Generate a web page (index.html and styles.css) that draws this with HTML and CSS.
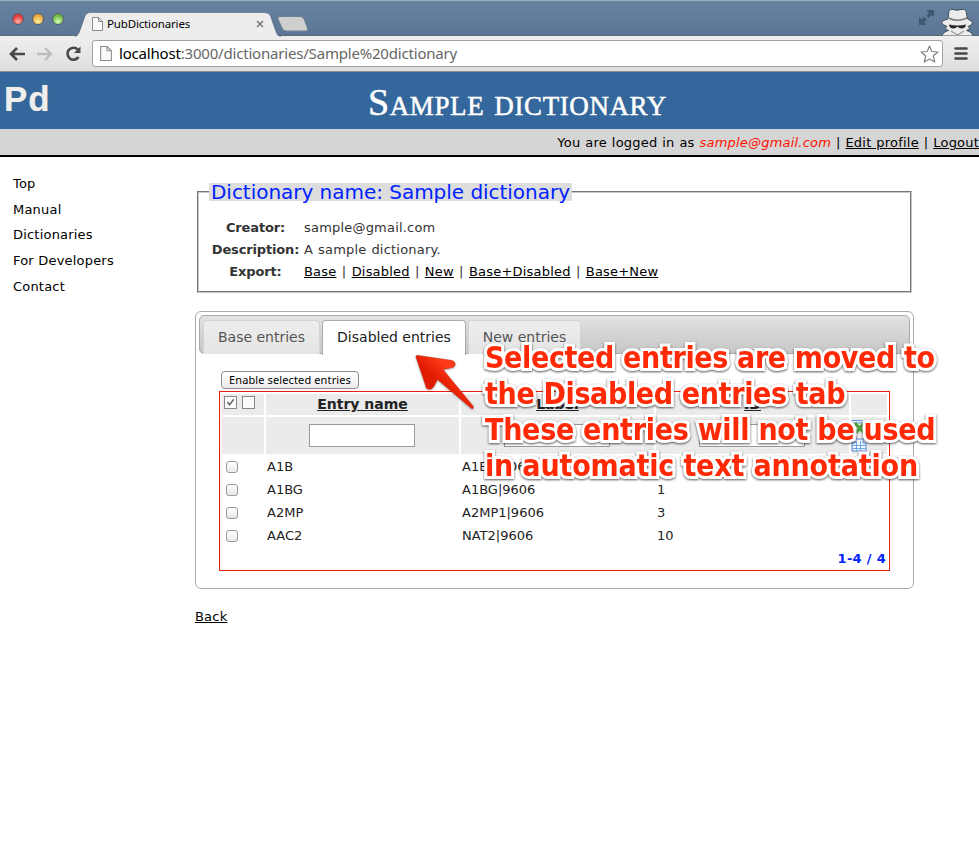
FILE: index.html
```html
<!DOCTYPE html>
<html lang="en">
<head>
<meta charset="utf-8">
<title>PubDictionaries</title>
<link rel="stylesheet" href="styles.css">
</head>
<body>
<div class="chrome">
  <div class="tabstrip">
    <div class="lights"><i class="light red"></i><i class="light amber"></i><i class="light green"></i></div>
    <div class="browser-tab">
      <svg class="tab-shape" width="206" height="26" viewBox="0 0 206 26"><path d="M0 25.500C3 25 4 22 5.500 18L10 5Q11.500 1.500 15 1.500H189Q194 1.500 195.500 5L200 18C201.500 22 202 25 206 25.500V26H0Z" fill="#ededed"/><path d="M0 25.500C3 25 4 22 5.500 18L10 5Q11.500 1.500 15 1.500H189Q194 1.500 195.500 5L200 18C201.500 22 202 25 206 25.500" fill="none" stroke="#52687f" stroke-opacity=".6"/></svg>
      <svg class="page-icon small" width="11" height="14" viewBox="0 0 11 14"><path d="M.5.5H6.500L10.500 4.500V13.500H.5ZM6.500.5V4.500H10.500" fill="#fafafa" stroke="#8b8b8b"/></svg>
      <span class="tab-title">PubDictionaries</span>
      <svg class="close" width="8" height="8" viewBox="0 0 8 8"><path d="M1 1L7 7M7 1L1 7" stroke="#777" stroke-width="1.500"/></svg>
    </div>
    <svg class="new-tab" width="32" height="16" viewBox="0 0 32 16"><path d="M1 3Q0 .5 3 .5H23Q26 .5 27 3L30.500 12Q31.500 15 28.500 15H9Q6 15 5 12Z" fill="#cfcfcf" stroke="#6f8194"/></svg>
    <svg class="expand" width="15" height="15" viewBox="0 0 15 15"><path d="M7 0H15V7L12.500 5L10 8L7.500 5.500L10 2.800ZM0 7L2.500 9.500L5 7L8 9.500L5 12L7.500 15H0Z" fill="#3f5871"/></svg>
    <svg class="spy" width="34" height="28" viewBox="0 0 34 28"><path d="M8 11L9 3Q10 .5 13 1.500Q17 3 21 1.500Q25 .5 26 3L27.500 11Q32 12.500 32.500 15Q31 18 28 18.500L30 20.500L26.500 22.500Q32 24 33 28H2Q3 24 8.500 22.500L5 20.500L7 18.500Q3 17 1.500 14.500Q3 12 8 11Z" fill="#ececec" stroke="#44525f"/><path d="M8.500 10Q17 14.500 27 10" fill="none" stroke="#777" stroke-width="1.500"/><path d="M9 16.500Q17 18.500 26 16.500Q25.500 20.500 21.500 20.500Q19 20.500 17.500 18.500Q16 20.500 13 20.500Q9.500 20.500 9 16.500Z" fill="#2b2b2b"/><path d="M11 23L17.500 27L24 23" fill="none" stroke="#999" stroke-width="1.300"/></svg>
  </div>
  <div class="toolbar">
    <svg class="nav-icon" width="16" height="14" viewBox="0 0 16 14"><path d="M8 1L2 7L8 13M2 7H16" fill="none" stroke="#484848" stroke-width="2.600"/></svg>
    <svg class="nav-icon" width="16" height="14" viewBox="0 0 16 14"><path d="M8 1L14 7L8 13M14 7H0" fill="none" stroke="#bdbdbd" stroke-width="2.400"/></svg>
    <svg class="nav-icon" width="16" height="16" viewBox="0 0 16 16"><path d="M12.800 3.500A6 6 0 1 0 13.500 11" fill="none" stroke="#484848" stroke-width="2.600"/><path d="M15.500 .5V7H9Z" fill="#484848"/></svg>
    <div class="omnibox">
      <svg class="page-icon" width="12" height="15" viewBox="0 0 11 14"><path d="M.5.5H6.500L10.500 4.500V13.500H.5ZM6.500.5V4.500H10.500" fill="#fafafa" stroke="#8b8b8b"/></svg>
      <span class="url"><b>localhost</b>:3000/dictionaries/Sample%20dictionary</span>
      <svg class="star" width="19" height="18" viewBox="0 0 19 18"><path d="M9.500 1L11.800 6.500L18 7L13.300 11L14.800 17L9.500 14L4.200 17L5.700 11L1 7L7.200 6.500Z" fill="#fff" stroke="#848484" stroke-width="1.200" stroke-linejoin="round"/></svg>
    </div>
    <svg class="menu" width="14" height="13" viewBox="0 0 14 13"><path d="M1.500 1.500H12.500M1.500 6.500H12.500M1.500 11.500H12.500" stroke="#484848" stroke-width="2.600" stroke-linecap="round"/></svg>
  </div>
</div>

<header class="banner"><span class="logo">Pd</span><h1>Sample dictionary</h1></header>
<div class="userbar"><span>You are logged in as <em>sample@gmail.com</em> | <a>Edit profile</a> | <a>Logout</a></span></div>

<div class="layout">
  <nav class="sidebar"><span>Top</span><span>Manual</span><span>Dictionaries</span><span>For Developers</span><span>Contact</span></nav>
  <main>
    <fieldset>
      <legend>Dictionary name: Sample dictionary</legend>
      <div class="info">
        <b>Creator:</b><span>sample@gmail.com</span>
        <b>Description:</b><span>A sample dictionary.</span>
        <b>Export:</b><span class="links"><a>Base</a> | <a>Disabled</a> | <a>New</a> | <a>Base+Disabled</a> | <a>Base+New</a></span>
      </div>
    </fieldset>
    <section class="tabs">
      <div class="tab-nav"><div class="tab t1">Base entries</div><div class="tab active">Disabled entries</div><div class="tab t3">New entries</div></div>
      <div class="panel">
        <button class="enable">Enable selected entries</button>
        <div class="table">
          <div class="th checks"><i class="sq"><svg width="11" height="11" viewBox="0 0 12 12"><path d="M2.500 5.500L5 8.500L9.500 2.500" fill="none" stroke="#666" stroke-width="1.600"/></svg></i><i class="sq"></i></div>
          <div class="th">Entry name</div><div class="th">Label</div><div class="th">ID</div><div class="th"></div>
          <div class="filter"></div><div class="filter"><input></div><div class="filter"><input></div><div class="filter"><input></div>
          <div class="filter sheet"><svg width="16" height="34" viewBox="0 0 16 34"><path d="M1 1.500H15M3 4H13" stroke="#5d9be0" /><path d="M4 4L13 14M13 4L5 14" stroke="#4ba03c" stroke-width="3"/><path d="M4 20H12V24H15V32H1V24H4Z" fill="#edf6ff" stroke="#568bd6"/><path d="M1 26.500H15M1 29.500H15M5.500 22V32M9.500 22V32" stroke="#76a6e6"/></svg></div>
          <div class="td"><i class="box"></i></div><div class="td">A1B</div><div class="td">A1B|9606</div><div class="td">2</div><div></div>
          <div class="td"><i class="box"></i></div><div class="td">A1BG</div><div class="td">A1BG|9606</div><div class="td">1</div><div></div>
          <div class="td"><i class="box"></i></div><div class="td">A2MP</div><div class="td">A2MP1|9606</div><div class="td">3</div><div></div>
          <div class="td"><i class="box"></i></div><div class="td">AAC2</div><div class="td">NAT2|9606</div><div class="td">10</div><div></div>
          <div class="pager">1-4 / 4</div>
        </div>
      </div>
    </section>
    <a class="back">Back</a>
  </main>
</div>

<svg class="arrow" width="70" height="64" viewBox="0 0 70 64"><defs><linearGradient id="g" x1="0" y1=".6" x2=".6" y2="0"><stop offset=".4" stop-color="#e01b00"/><stop offset=".8" stop-color="#ff3a18"/></linearGradient></defs><path d="M5 6Q4.500 4 7 4.500L41 9.500Q45 11 44 14Q43 17 39 17L32 18.500L62 55Q63 59 60 57L26.500 28.500L22.500 36Q20.500 39 17 38Q14.500 37 14.500 34Z" fill="url(#g)" stroke="#c82a10" stroke-width=".6" transform="matrix(1 0 0 1 0 1)"/></svg>
<div class="note"><span class="l1">Selected entries are moved to</span><span class="l2">the Disabled entries tab</span><span class="l3">These entries will not be used</span><span class="l4">in automatic text annotation</span></div>
</body>
</html>
```
FILE: styles.css
```css
* { box-sizing: border-box; }
body { margin: 0; width: 979px; height: 855px; overflow: hidden; position: relative; background: #fff; color: #111; font: 13px/18px "DejaVu Sans", sans-serif; letter-spacing: .2px; }
svg { display: block; flex: none; }
a { color: #000; text-decoration: underline; }
.chrome { font-family: "Noto Sans", "Open Sans", sans-serif; letter-spacing: 0; }
.tabstrip { height: 36px; display: flex; background: linear-gradient(#6883a1, #5b7694); border-top: 1px solid #9cb0c0; border-bottom: 1px solid #5d6b78; }
.lights { display: flex; gap: 8px; padding: 12px 0 0 12px; width: 75px; }
.light { width: 12px; height: 12px; border-radius: 50%; border: 1px solid #55606b; }
.red { background: radial-gradient(circle at 50% 75%, #ffb0a5, #e2383a 65%); }
.amber { background: radial-gradient(circle at 50% 75%, #fff0a0, #eca53a 65%); }
.green { background: radial-gradient(circle at 50% 75%, #d6ffb0, #6fb84a 65%); }
.browser-tab { position: relative; width: 206px; height: 26px; margin-top: 10px; display: flex; align-items: center; padding: 0 17px; }
.tab-shape { position: absolute; left: 0; top: 0; }
.browser-tab > :not(.tab-shape) { position: relative; }
.tab-title { font-size: 11.500px; color: #000; margin-left: 4px; flex: 1; letter-spacing: -.15px; }
.close { margin-right: 0; }
.new-tab { margin: 15px 0 0 -4px; }
.expand { margin: 9px 6px 0 auto; }
.spy { margin: 7px 5px 0 0; }
.toolbar { height: 36px; display: flex; align-items: center; background: linear-gradient(#efefef, #dedede); border-bottom: 1px solid #8a8f90; padding: 0 11px 0 9px; }
.nav-icon { margin-right: 12px; }
.omnibox { height: 27px; flex: 1; background: #fff; border: 1px solid #a2a2a2; border-radius: 3px; display: flex; align-items: center; padding: 0 3px 0 7px; margin-left: -1px; }
.url { font-size: 15px; color: #666; margin: -2px 0 0 7px; flex: 1; letter-spacing: -.19px; }
.url b { font-weight: normal; color: #000; }
.menu { margin-left: 11px; }
.banner { height: 57px; background: #34679b; display: flex; }
.logo { font: bold 35px/36px "Liberation Sans", sans-serif; color: #eee; letter-spacing: .8px; margin: 9px 0 0 4px; width: 364px; text-shadow: 0 0 1px #999; }
h1 { margin: 7px 0 0; font: normal 38px/46px "Liberation Serif", serif; font-variant: small-caps; color: #fff; letter-spacing: .6px; white-space: nowrap; -webkit-text-stroke: .5px #fff; }
.userbar { height: 28px; background: #d5d5d5; border-bottom: 2px solid #000; display: flex; justify-content: flex-end; color: #000; line-height: 27px; white-space: nowrap; word-spacing: .6px; }
.userbar em { color: #f10; }
.layout { display: flex; }
.sidebar { width: 195px; flex: none; padding: 18px 0 0 13px; display: flex; flex-direction: column; gap: 7.700px; color: #000; }
main { width: 719px; padding-top: 26px; }
fieldset { margin: 0 2px; height: 110px; border: 2px solid #777; border-style: groove; border-color: #c8c8c8; padding: 0 2px 0 10px; min-width: 0; }
legend { background: #ddd; color: #02f; font-size: 20px; line-height: 18px; height: 18px; padding: 0 2px; white-space: nowrap; letter-spacing: -.03px; }
.info { display: grid; grid-template-columns: 91px 1fr; grid-auto-rows: 22px; line-height: 22px; padding-top: 16px; color: #333; }
.info b { text-align: center; letter-spacing: -.15px; margin-left: 1px; margin-right: -1px; white-space: nowrap; }
.info span { padding-left: 4px; word-spacing: .6px; }
.info .links { word-spacing: .95px; }
.tabs { margin-top: 18px; height: 278px; border: 1px solid #aaa; border-radius: 6px; padding: 3px; }
.tab-nav { height: 39px; border: 1px solid #aaa; border-radius: 5px; background: linear-gradient(#e2e2e2, #c6c6c6); display: flex; padding: 4px 0 0 3px; gap: 2px; }
.tab { height: 34px; border: 1px solid #d3d3d3; border-bottom: 0; border-radius: 4px 4px 0 0; background: linear-gradient(#ededed, #e4e4e4); font-size: 14px; line-height: 33px; color: #555; text-align: center; letter-spacing: 0; white-space: nowrap; }
.t1 { width: 117px; } .active { width: 144px; height: 35px; background: #fff; border-color: #aaa; color: #212121; } .t3 { width: 113px; }
.panel { padding: 17px 20px 0; }
.enable { display: block; margin-left: 2px; width: 138px; height: 18px; border: 1px solid #8e8e8e; border-radius: 4px; background: linear-gradient(#fff, #f6f6f6 50%, #eaeaea); font: 11px/14px "Noto Sans", sans-serif; color: #000; padding: 0 0 1px; letter-spacing: .12px; white-space: nowrap; }
.table { width: 671px; height: 180px; margin-top: 2px; border: 1px solid #e9200b; padding: 2px; display: grid; grid-template-columns: 42px 193px 193px 193px 36px; column-gap: 2px; row-gap: 2px; grid-template-rows: 21px 37px repeat(4, 21px) 22px; color: #222; }
.th { background: #ebebeb; text-align: center; font-weight: bold; font-size: 14px; line-height: 21px; text-decoration: underline; letter-spacing: 0; }
.checks { display: flex; gap: 5px; padding: 2px; }
.sq { width: 13px; height: 13px; border: 1px solid #888; background: #fafafa; }
.filter { background: #ebebeb; display: flex; align-items: center; justify-content: center; }
.filter input { width: 106px; height: 23px; border: 1px solid #999; padding: 0; margin: -1px 2px 0 0; }
.sheet { justify-content: flex-start; }
.td { padding-left: 1px; line-height: 21px; letter-spacing: 0; }
.box { display: block; width: 12px; height: 12px; margin: 5px 0 0 3px; border: 1px solid #999; border-radius: 3px; background: linear-gradient(#fff, #e8e8e8); }
.pager { grid-column: 1 / -1; text-align: right; color: #02f; font-weight: bold; padding-right: 1px; line-height: 22px; letter-spacing: .3px; }
.back { display: inline-block; margin-top: 19px; }
.arrow { position: absolute; left: 411px; top: 350px; filter: drop-shadow(0 1px 1px rgba(0,0,0,.3)); }
.note { position: absolute; left: 485px; top: 340px; display: flex; flex-direction: column; font: bold 30px/36px "DejaVu Sans Condensed", "Noto Sans", sans-serif; color: #ff2a05; white-space: nowrap; -webkit-text-stroke: 6px #fff; paint-order: stroke fill; stroke-linejoin: round; filter: drop-shadow(0 1px 1px rgba(0,0,0,.65)); letter-spacing: -.35px; }
.l3 { letter-spacing: -.27px; }
.l4 { letter-spacing: -.17px; }
```
